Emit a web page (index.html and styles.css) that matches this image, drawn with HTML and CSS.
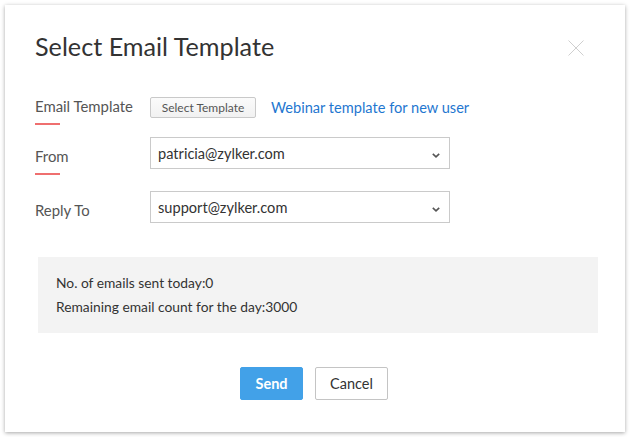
FILE: index.html
```html
<!DOCTYPE html>
<html>
<head>
<meta charset="utf-8">
<link rel="stylesheet" href="styles.css">
</head>
<body>
<div class="dialog">
  <h1 class="title">Select Email Template</h1>
  <button class="close" aria-label="Close">
    <svg width="16" height="16" viewBox="0 0 16 16"><path d="M0.5 0.5L15.5 15.5M15.5 0.5L0.5 15.5" stroke="#cfcfcf" stroke-width="1" fill="none"/></svg>
  </button>
  <div class="row row1">
    <div class="label mandatory">Email Template</div>
    <div class="field field-template">
      <button class="btn-template">Select Template</button>
      <a class="link">Webinar template for new user</a>
    </div>
  </div>
  <div class="row row2">
    <div class="label label-sel mandatory">From</div>
    <div class="select">
      <span>patricia@zylker.com</span>
      <svg class="chev" width="8" height="5" viewBox="0 0 8 5"><path d="M0.8 0.8L4 3.8L7.2 0.8" stroke="#555" stroke-width="1.6" fill="none"/></svg>
    </div>
  </div>
  <div class="row row3">
    <div class="label label-sel">Reply To</div>
    <div class="select">
      <span>support@zylker.com</span>
      <svg class="chev" width="8" height="5" viewBox="0 0 8 5"><path d="M0.8 0.8L4 3.8L7.2 0.8" stroke="#555" stroke-width="1.6" fill="none"/></svg>
    </div>
  </div>
  <div class="info">
    <p>No. of emails sent today:0</p>
    <p>Remaining email count for the day:3000</p>
  </div>
  <div class="actions">
    <button class="btn btn-primary">Send</button>
    <button class="btn btn-default">Cancel</button>
  </div>
</div>
</body>
</html>
```
FILE: styles.css
```css
* { box-sizing: border-box; }
html, body { margin: 0; padding: 0; background: #fff; }
body {
  font-family: Lato, "Open Sans", sans-serif;
  color: #333;
  padding: 5px;
}
.dialog {
  position: relative;
  width: 620px;
  height: 427px;
  background: #fff;
  box-shadow: 0 1px 4px rgba(0,0,0,0.35);
  padding: 27px 30px 0 30px;
}
.title {
  margin: 0;
  font-size: 25.2px;
  line-height: 28px;
  font-weight: 400;
  color: #333;
}
.close {
  position: absolute;
  top: 35px;
  right: 41px;
  width: 16px;
  height: 16px;
  padding: 0;
  border: 0;
  background: none;
}
.close svg { display: block; }
.row { display: flex; align-items: flex-start; }
.row1 { margin-top: 36px; }
.row2 { margin-top: 12px; }
.row3 { margin-top: 16px; }
.label {
  width: 115px;
  flex: none;
  font-size: 14.9px;
  line-height: 20px;
  color: #555;
}
.label-sel { padding-top: 9px; }
.mandatory::after {
  content: "";
  display: block;
  width: 25px;
  height: 2px;
  background: #ef6f6f;
  margin-top: 7px;
}
.field-template {
  display: flex;
  align-items: center;
  margin-top: 1px;
}
.btn-template {
  height: 21px;
  width: 106px;
  padding: 0;
  font-family: inherit;
  font-size: 12px;
  color: #555;
  background: linear-gradient(#fbfbfb, #f1f1f1);
  border: 1px solid #c9c9c9;
  border-radius: 2px;
}
.link {
  margin-left: 15px;
  font-size: 14.6px;
  color: #1f77d0;
  cursor: pointer;
  line-height: 20px;
}
.select {
  position: relative;
  width: 300px;
  height: 32px;
  border: 1px solid #cacaca;
  display: flex;
  align-items: center;
  padding-left: 7px;
  font-size: 14.6px;
  color: #333;
}
.chev {
  position: absolute;
  right: 9px;
  top: 15px;
}
.info {
  margin: 34px 0 0 3px;
  width: 560px;
  height: 76px;
  background: #f3f3f3;
  padding: 14px 18px 0 18px;
  font-size: 13.8px;
  line-height: 24px;
  color: #333;
}
.info p { margin: 0; }
.actions {
  display: flex;
  justify-content: center;
  gap: 12px;
  margin-top: 34px;
  padding-right: 2px;
}
.btn {
  height: 33px;
  font-family: inherit;
  font-size: 14.5px;
  border-radius: 2px;
  padding: 0;
}
.btn-primary {
  width: 63px;
  background: #42a1e8;
  border: 1px solid #42a1e8;
  color: #fff;
  font-weight: 700;
}
.btn-default {
  width: 73px;
  background: #fff;
  border: 1px solid #c4c4c4;
  color: #333;
}
```
